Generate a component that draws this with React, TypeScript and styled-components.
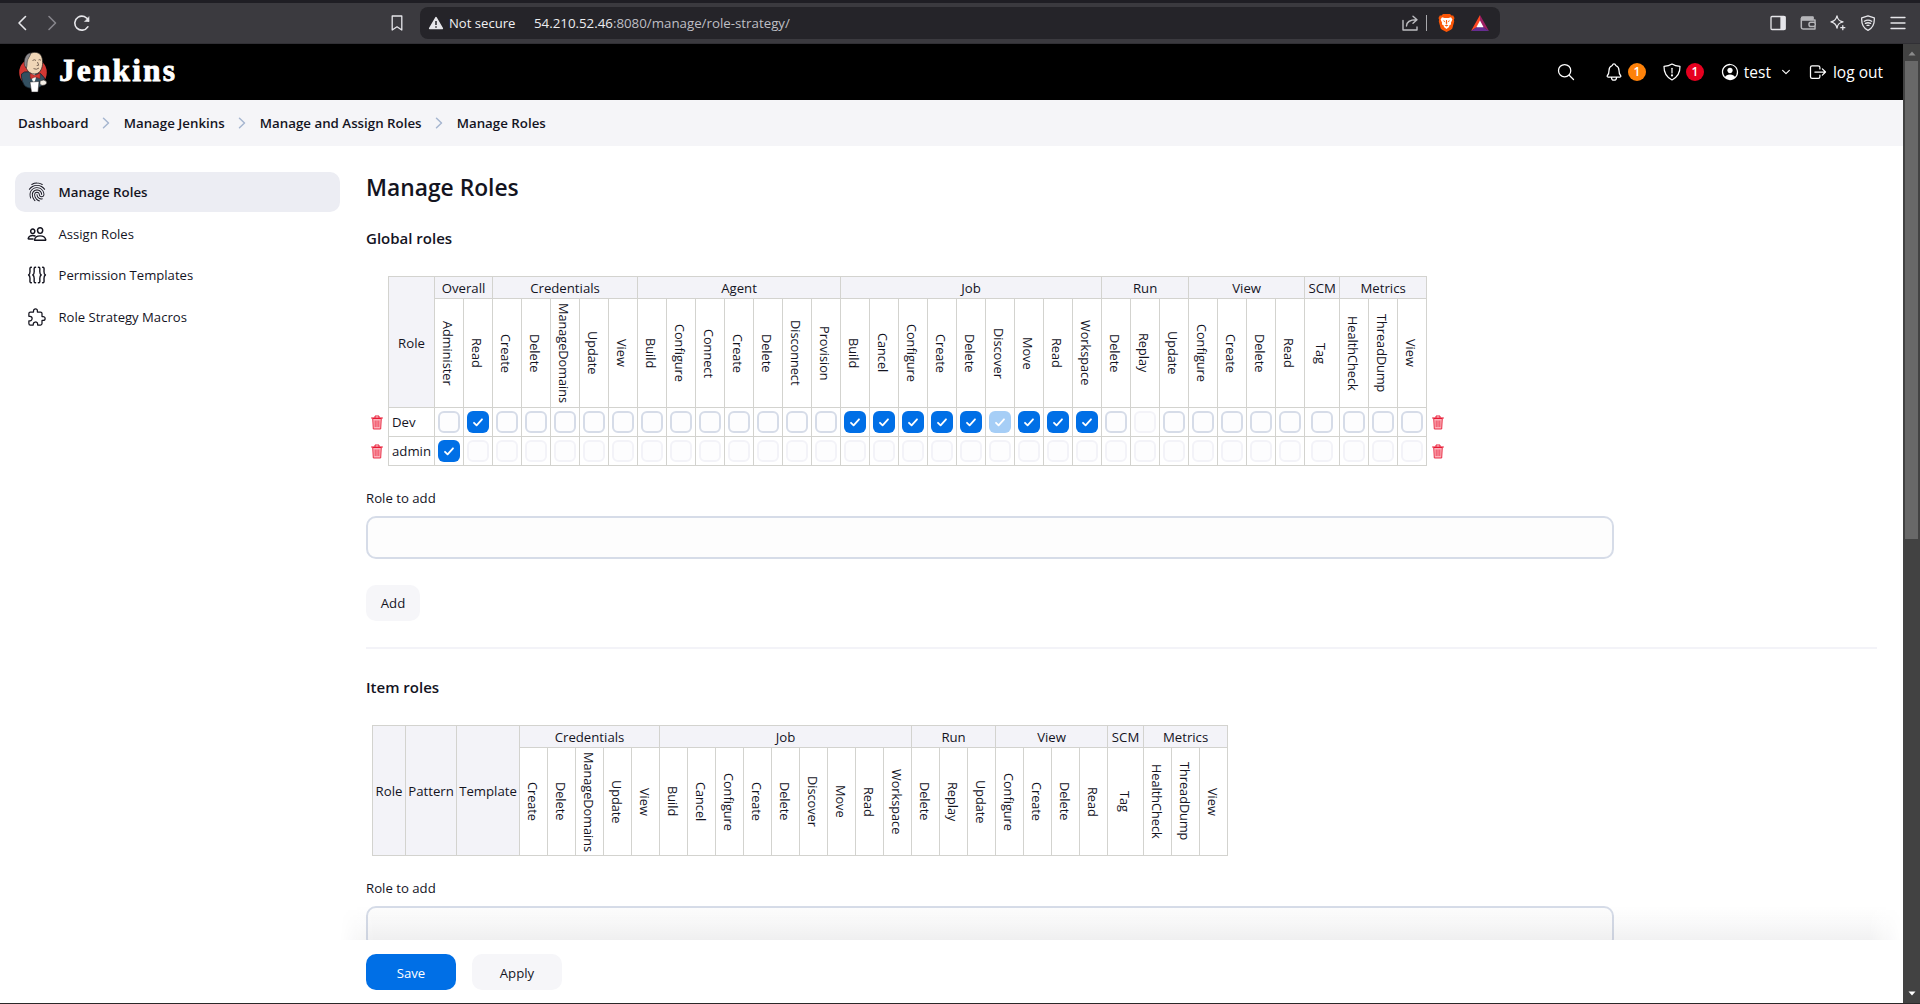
import React from "react";
import styled, { createGlobalStyle, css } from "styled-components";
import {
  IoChevronDownOutline,
  IoExtensionPuzzleOutline,
  IoFingerPrintOutline,
  IoLogOutOutline,
  IoNotificationsOutline,
  IoPeopleOutline,
  IoPersonCircleOutline,
  IoSearchOutline,
} from "react-icons/io5";

const GlobalStyle = createGlobalStyle`
  *, *::before, *::after { box-sizing: border-box; }
  html, body { margin: 0; padding: 0; background: #fff; overflow: hidden; }
  body {
    font-family: "Open Sans", "Noto Sans", sans-serif;
    font-size: 13.2px;
    color: #14141f;
  }
  svg { display: block; flex: none; }
`;

const Window = styled.div`
  display: flex;
  flex-direction: column;
  width: 1920px;
  height: 1004px;
  overflow: hidden;
  border-bottom: 1px solid #2b2829;
`;

/* ---------- browser chrome ---------- */

const Toolbar = styled.div`
  display: flex;
  align-items: center;
  flex: none;
  height: 44px;
  padding: 0 14px 0 15px;
  background: #3b3a3f;
  border-top: 3px solid #1f1e24;
  border-bottom: 1px solid #313035;
  color: #e6e6ea;
`;

const NavButtons = styled.div`
  display: flex;
  align-items: center;
  gap: 13.5px;
  width: 373px;
`;

const AddressBar = styled.div`
  display: flex;
  align-items: center;
  width: 1080px;
  height: 32px;
  margin-left: 14px;
  padding: 0 11px 0 8px;
  border-radius: 8px;
  background: #252429;
`;

const Security = styled.span`
  width: 85px;
  margin-left: 5px;
  font-size: 13.1px;
  color: #f0f0f2;
`;

const Url = styled.span`
  flex: 1;
  font-size: 13.3px;
  color: #bfbfc4;
  b { font-weight: 400; color: #ececef; }
`;

const AddressActions = styled.div`
  display: flex;
  align-items: center;
  gap: 8px;
`;

const Divider = styled.span`
  width: 1px;
  height: 16px;
  margin-right: 3px;
  background: #a9a9ad;
`;

const BrowserActions = styled.div`
  display: flex;
  gap: 14px;
  margin-left: auto;
`;

/* ---------- page frame ---------- */

const Viewport = styled.div`
  display: flex;
  flex: 1;
  min-height: 0;
`;

const Page = styled.div`
  position: relative;
  display: flex;
  flex-direction: column;
  width: 1903px;
  overflow: hidden;
`;

const Scrollbar = styled.div`
  display: flex;
  flex-direction: column;
  align-items: center;
  width: 17px;
  padding: 7px 0 7px;
  background: #424242;
`;

const Thumb = styled.div`
  width: 13px;
  height: 478px;
  margin: 5px 0 auto;
  background: #686868;
`;

const Header = styled.header`
  display: flex;
  align-items: center;
  flex: none;
  height: 56px;
  padding: 0 20px 0 18px;
  background: #000;
  color: #fff;
`;

const Wordmark = styled.span`
  margin: -3px auto 0 10px;
  font: 700 31.5px/40px "Liberation Serif", serif;
  letter-spacing: 2.1px;
  -webkit-text-stroke: 0.8px #fff;
`;

const HeaderItem = styled.div<{ $gap: number; $before: number }>`
  display: flex;
  align-items: center;
  gap: ${(p) => p.$gap}px;
  margin-left: ${(p) => p.$before}px;
  font-size: 15.5px;
  font-weight: 500;
  line-height: 24px;
`;

const Badge = styled.span<{ $color: string }>`
  width: 18px;
  height: 18px;
  border-radius: 50%;
  background: ${(p) => p.$color};
  font-size: 12px;
  font-weight: 600;
  line-height: 18px;
  text-align: center;
`;

const Breadcrumbs = styled.nav`
  display: flex;
  align-items: center;
  flex: none;
  gap: 13.6px;
  height: 46px;
  padding-left: 18px;
  background: #f5f5f8;
  font-size: 13.3px;
  font-weight: 600;
`;

const Columns = styled.div`
  display: flex;
  flex: 1;
  min-height: 0;
  padding: 26px 26px 0 15px;
`;

const Sidebar = styled.aside`
  display: flex;
  flex-direction: column;
  flex: none;
  gap: 1.6px;
  width: 325px;
  margin-right: 26px;
`;

const Task = styled.a<{ $active?: boolean }>`
  display: flex;
  align-items: center;
  gap: 11.5px;
  height: 40px;
  padding-left: 12px;
  border-radius: 10px;
  font-size: 13.1px;
  ${(p) =>
    p.$active &&
    css`
      background: #ecedf3;
      font-size: 13.3px;
      font-weight: 600;
    `}
`;

const Main = styled.main`
  flex: 1;
  min-width: 0;
`;

const Title = styled.h1`
  margin: 0 0 21px;
  font-size: 22.8px;
  font-weight: 600;
  line-height: 32px;
`;

const SectionTitle = styled.h2`
  margin: 0;
  font-size: 15px;
  font-weight: 600;
  line-height: 26px;
`;

/* ---------- permission matrix ---------- */

const line = "1px solid #d3d3cf";

const Matrix = styled.table<{ $width: number; $top: number; $left: number }>`
  width: ${(p) => p.$width}px;
  margin: ${(p) => p.$top}px 0 0 ${(p) => p.$left}px;
  table-layout: fixed;
  border-collapse: separate;
  border-spacing: 0;
`;

const HeadCell = styled.th<{ $first?: boolean; $shift?: number }>`
  height: 23px;
  padding: ${(p) => p.$shift ?? 0}px 0 0;
  border-top: ${line};
  border-right: ${line};
  border-bottom: ${line};
  border-left: ${(p) => (p.$first ? line : "none")};
  background: #f3f3f8;
  font-weight: 400;
  line-height: 18px;
  text-align: center;
  white-space: nowrap;
`;

const PermissionCell = styled.th<{ $height: number }>`
  height: ${(p) => p.$height}px;
  padding: 0;
  border-right: ${line};
  border-bottom: ${line};
  font-weight: 400;
`;

const VerticalLabel = styled.span`
  display: inline-block;
  width: 20px;
  margin-right: 2px;
  font-size: 12.7px;
  line-height: 20px;
  writing-mode: vertical-rl;
  white-space: nowrap;
  vertical-align: middle;
`;

const NameCell = styled.td`
  height: 29px;
  padding: 0 0 0 3px;
  border-right: ${line};
  border-bottom: ${line};
  border-left: ${line};
  line-height: 20px;
`;

const CheckCell = styled.td`
  padding: 3px 0;
  border-right: ${line};
  border-bottom: ${line};
`;

const ToolCell = styled.td<{ $pad: number }>`
  padding: 0 0 1px ${(p) => p.$pad}px;
`;

type State = "on" | "off" | "on-disabled" | "off-disabled";

const Box = styled.span<{ $state: State }>`
  display: flex;
  align-items: center;
  justify-content: center;
  width: 22px;
  height: 22px;
  margin: 0 auto;
  border-radius: 6px;
  border: ${(p) =>
    p.$state === "off" ? "2px solid #d6dce8" : p.$state === "off-disabled" ? "2px solid #f3f3f8" : "none"};
  background: ${(p) => (p.$state === "on" ? "#006fe6" : p.$state === "on-disabled" ? "#a6cef6" : "#fdfdfe")};
`;

/* ---------- form controls ---------- */

const Label = styled.label<{ $top: number }>`
  display: block;
  margin-top: ${(p) => p.$top}px;
  line-height: 20px;
`;

const Input = styled.input`
  display: block;
  width: 1248px;
  height: 43px;
  margin-top: 8px;
  border: 2px solid #d6dce8;
  border-radius: 10px;
  background: #fdfdfd;
`;

const Button = styled.button<{ $primary?: boolean; $width: number; $shift?: number }>`
  width: ${(p) => p.$width}px;
  height: 36px;
  padding: ${(p) => p.$shift ?? 0}px 0 0;
  border: 0;
  border-radius: 10px;
  background: ${(p) => (p.$primary ? "#006fe6" : "#f6f6f9")};
  color: ${(p) => (p.$primary ? "#fff" : "#14141f")};
  font: ${(p) => (p.$primary ? 500 : 400)} 13.2px "Open Sans", "Noto Sans", sans-serif;
`;

const AddRow = styled.div`
  display: flex;
  padding: 26px 0;
`;

const Rule = styled.hr`
  height: 2px;
  margin: 0 0 25px;
  border: 0;
  background: #f3f3f8;
`;

const SaveBar = styled.footer`
  position: absolute;
  right: 0;
  bottom: 0;
  left: 340px;
  display: flex;
  gap: 16px;
  height: 63px;
  padding: 14px 26px;
  background: #fff;
  &::before {
    content: "";
    position: absolute;
    right: 0;
    bottom: 100%;
    left: 0;
    height: 34px;
    background: linear-gradient(to top, rgba(20, 20, 31, 0.06), rgba(20, 20, 31, 0.03) 40%, transparent);
    mask-image: linear-gradient(to right, transparent, #000 34px, #000 calc(100% - 34px), transparent);
  }
`;

/* ---------- icons ---------- */

type StrokeProps = { w?: number; h?: number; sw?: number; color?: string; children: React.ReactNode };

const Stroke = ({ w = 16, h = 16, sw = 1.3, color = "currentColor", children }: StrokeProps) => (
  <svg
    width={w}
    height={h}
    viewBox={`0 0 ${w} ${h}`}
    fill="none"
    stroke={color}
    strokeWidth={sw}
    strokeLinecap="round"
    strokeLinejoin="round"
  >
    {children}
  </svg>
);

const JenkinsLogo = () => (
  <svg width="31" height="42" viewBox="0 0 31 42">
    <ellipse cx="15" cy="21.500" rx="13.800" ry="14" fill="#d33833" />
    <path d="M3.500 23c-.5 5 1.500 10 4 12.500 3 2 9 2.500 13 1 4-1.500 6-5 6-9.500l-4-4.500-7-2-9 .5z" fill="#335061" stroke="#14202a" strokeWidth=".8" />
    <path d="M14 21l-1.500 4L16 33l2.500-8z" fill="#f7f7f2" />
    <path d="M7.500 9C9 3 14 .8 18.500 1.500c5 .8 6.500 6 6 12-.5 5.500-3.500 9.500-8 9.500-5 0-8-4-9-8z" fill="#f0d6b7" stroke="#231f20" strokeWidth=".7" />
    <path d="M13 1.800C8 2.500 5.300 8 6.500 14.500L8.200 17c1-1.500.8-4 1-6C9.800 7 12 6 13 1.800z" fill="#8d8b8e" stroke="#231f20" strokeWidth=".5" />
    <path d="M14.500 9.500q2-1.500 3.500 0M20.500 9q1.500-1 2.500 .4M19.500 11l1.200 3.200-2 .4M15.500 17.600q3 1.600 5.500-.6" fill="none" stroke="#6d5a4c" strokeWidth=".9" />
    <path d="M12 22.500l5 2 5-2.500v5.500l-5-1.500-4.500 2z" fill="#d33833" stroke="#7c1c18" strokeWidth=".5" />
    <path d="M12 31l9-.5L20 41h-6.500z" fill="#fff" stroke="#231f20" strokeWidth=".5" />
    <path d="M22 30q4-2 6 0t-1 4q-3 1-5-.5z" fill="#f5efe6" stroke="#231f20" strokeWidth=".6" />
  </svg>
);

const BraveLion = () => (
  <svg width="17" height="18" viewBox="0 0 17 18">
    <path d="M5 0h7l1.500 1.600 1.700-.2L16.500 4l-.6 1.800.3 1.700-1.700 6.300c-.3 1-.8 1.500-1.600 2L8.500 18l-4.400-2.200c-.8-.5-1.300-1-1.600-2L.8 7.500l.3-1.700L.5 4l1.300-2.600 1.700.2z" fill="#fb5607" />
    <path d="M4 3.300l2.600.6h3.800l2.600-.6 1.400 2.200-1.500 3.200.2 1.600-2.300 1.600.6.8-2.900 2.400-2.900-2.400.6-.8-2.300-1.600.2-1.600-1.500-3.200z" fill="#fff" />
    <path d="M4.700 6.300l2.300.6-.4 1.400zM12.300 6.300l-2.300.6.4 1.400zM8 6h1l.3 3.500L8.500 10l-.8-.5zM6.600 11.400l1.900-.8 1.900.8-1.900 1z" fill="#fb5607" />
  </svg>
);

const BatTriangle = styled.svg`
  margin-left: 8px;
`;

const ShieldAlert = () => (
  <Stroke w={18} h={18} sw={1.2}>
    <path d="M9 1C6.800 2.500 4.200 3.200 1 3.300 .8 9.800 3.200 14 9 17c5.800-3 8.200-7.200 8-13.700C13.800 3.200 11.200 2.500 9 1z" />
    <path d="M9 5.300v4.600" />
    <circle cx="9" cy="12.400" r=".5" fill="currentColor" />
  </Stroke>
);

const Braces = () => (
  <Stroke w={20} h={20} sw={1.4}>
    <path d="M4.400 2.200C2.400 2.200 3 4 3 6.500S2.800 9.500 1.600 10c1.200.5 1.400 1 1.400 3.500s-.6 4.300 1.400 4.300" />
    <path d="M8.600 2.200c-2 0-1.400 1.800-1.400 4.300S7 9.500 5.800 10c1.200.5 1.400 1 1.400 3.500s-.6 4.300 1.400 4.300" />
    <path d="M11.400 2.200c2 0 1.400 1.800 1.400 4.300s.2 3 1.400 3.500c-1.200.5-1.400 1-1.400 3.500s.6 4.300-1.400 4.300" />
    <path d="M15.600 2.200c2 0 1.400 1.800 1.400 4.300s.2 3 1.400 3.500c-1.200.5-1.400 1-1.400 3.500s.6 4.300-1.400 4.300" />
  </Stroke>
);

const People = styled(IoPeopleOutline)`
  path { stroke-width: 38px !important; }
`;

const MenuChevron = styled(IoChevronDownOutline)`
  margin-left: 5px;
`;

const Trash = () => (
  <svg width="12" height="15" viewBox="0 0 12 15">
    <path d="M1.700 3.500h8.600l-.6 10.500H2.300z" fill="#fbb0b9" stroke="#e8203a" strokeWidth=".9" />
    <path d="M.2 3h11.600" stroke="#e6001f" strokeWidth="1" />
    <path d="M4 2.800V1h4v1.800" fill="none" stroke="#e6001f" strokeWidth=".9" />
    <path d="M4.200 5.500v6.500M6 5.500v6.500M7.800 5.500v6.500" stroke="#e6001f" strokeWidth=".6" />
  </svg>
);

const Check = () => (
  <Stroke w={22} h={22} sw={1.8} color="#fff">
    <path d="M7 11.800l2.600 2.600L15 8.300" />
  </Stroke>
);

const Crumb = () => (
  <Stroke w={8} h={12} sw={1.5} color="#a6b6d0">
    <path d="M1.500 1.200L6.500 6l-5 4.800" />
  </Stroke>
);

const Arrow = ({ down }: { down?: boolean }) => (
  <svg width="8" height="5" viewBox="0 0 8 5">
    <path d={down ? "M.5 .5h7L4 4.500z" : "M.5 4.500h7L4 .5z"} fill={down ? "#fff" : "#8b8b8b"} />
  </svg>
);

/* ---------- data ---------- */

type Group = { name: string; permissions: string[] };

const credentials: Group = {
  name: "Credentials",
  permissions: ["Create", "Delete", "ManageDomains", "Update", "View"],
};

const shared: Group[] = [
  {
    name: "Job",
    permissions: ["Build", "Cancel", "Configure", "Create", "Delete", "Discover", "Move", "Read", "Workspace"],
  },
  { name: "Run", permissions: ["Delete", "Replay", "Update"] },
  { name: "View", permissions: ["Configure", "Create", "Delete", "Read"] },
  { name: "SCM", permissions: ["Tag"] },
  { name: "Metrics", permissions: ["HealthCheck", "ThreadDump", "View"] },
];

const globalGroups: Group[] = [
  { name: "Overall", permissions: ["Administer", "Read"] },
  credentials,
  {
    name: "Agent",
    permissions: ["Build", "Configure", "Connect", "Create", "Delete", "Disconnect", "Provision"],
  },
  ...shared,
];

const itemGroups: Group[] = [credentials, ...shared];

const roles: { name: string; state: (group: string, permission: string) => State }[] = [
  {
    name: "Dev",
    state: (group, permission) => {
      if (group === "Job") return permission === "Discover" ? "on-disabled" : "on";
      if (group === "Overall" && permission === "Read") return "on";
      return group === "Run" && permission === "Replay" ? "off-disabled" : "off";
    },
  },
  { name: "admin", state: (_group, permission) => (permission === "Administer" ? "on" : "off-disabled") },
];

const Col = styled.col<{ $width: number }>`
  width: ${(p) => p.$width}px;
`;

const Cols = ({ groups, width, scm }: { groups: Group[]; width: number; scm: number }) => (
  <>
    {groups.flatMap((g) =>
      g.permissions.map((p) => <Col key={g.name + p} $width={g.name === "SCM" ? scm : width} />),
    )}
  </>
);

const GroupHeads = ({ groups }: { groups: Group[] }) => (
  <>
    {groups.map((g) => (
      <HeadCell key={g.name} colSpan={g.permissions.length}>
        {g.name}
      </HeadCell>
    ))}
  </>
);

const PermissionHeads = ({ groups, height }: { groups: Group[]; height: number }) => (
  <>
    {groups.flatMap((g) =>
      g.permissions.map((p) => (
        <PermissionCell key={g.name + p} $height={height}>
          <VerticalLabel>{p}</VerticalLabel>
        </PermissionCell>
      )),
    )}
  </>
);

const GlobalMatrix = () => (
  <Matrix $width={1082} $top={25} $left={5}>
    <colgroup>
      <Col $width={17} />
      <Col $width={47} />
      <Cols groups={globalGroups} width={29} scm={35} />
      <Col $width={26} />
    </colgroup>
    <thead>
      <tr>
        <td rowSpan={2} />
        <HeadCell rowSpan={2} $first $shift={2}>
          Role
        </HeadCell>
        <GroupHeads groups={globalGroups} />
      </tr>
      <tr>
        <PermissionHeads groups={globalGroups} height={109} />
      </tr>
    </thead>
    <tbody>
      {roles.map((role) => (
        <tr key={role.name}>
          <ToolCell $pad={0}>
            <Trash />
          </ToolCell>
          <NameCell>{role.name}</NameCell>
          {globalGroups.flatMap((g) =>
            g.permissions.map((p) => {
              const state = role.state(g.name, p);
              return (
                <CheckCell key={g.name + p}>
                  <Box $state={state}>{state.startsWith("on") && <Check />}</Box>
                </CheckCell>
              );
            }),
          )}
          <ToolCell $pad={5}>
            <Trash />
          </ToolCell>
        </tr>
      ))}
    </tbody>
  </Matrix>
);

const ItemMatrix = () => (
  <Matrix $width={856} $top={25} $left={6}>
    <colgroup>
      <Col $width={34} />
      <Col $width={51} />
      <Col $width={63} />
      <Cols groups={itemGroups} width={28} scm={36} />
    </colgroup>
    <thead>
      <tr>
        <HeadCell rowSpan={2} $first>
          Role
        </HeadCell>
        <HeadCell rowSpan={2}>Pattern</HeadCell>
        <HeadCell rowSpan={2}>Template</HeadCell>
        <GroupHeads groups={itemGroups} />
      </tr>
      <tr>
        <PermissionHeads groups={itemGroups} height={108} />
      </tr>
    </thead>
  </Matrix>
);

/* ---------- sections ---------- */

const BrowserToolbar = () => (
  <Toolbar>
    <NavButtons>
      <Stroke sw={1.6}>
        <path d="M10.500 1.500L4 8l6.500 6.500" />
      </Stroke>
      <Stroke sw={1.6} color="#87868c">
        <path d="M4 1.500L10.500 8 4 14.500" />
      </Stroke>
      <Stroke sw={1.6}>
        <path d="M13.800 11.800A7 7 0 1 1 14.500 6" />
        <path d="M15 2v4.500h-4.200z" fill="#e6e6ea" strokeWidth=".6" />
      </Stroke>
    </NavButtons>
    <Stroke w={18}>
      <path d="M4.200 1h9.600v14L9 11.800 4.200 15z" />
    </Stroke>
    <AddressBar>
      <svg width="16" height="14" viewBox="0 0 16 14">
        <path d="M8 1.600L14.300 12.500H1.700z" fill="#e6e6ea" stroke="#e6e6ea" strokeWidth="1.600" strokeLinejoin="round" />
        <path d="M8 5v4M8 10.300v1.400" stroke="#252429" strokeWidth="1.500" />
      </svg>
      <Security>Not secure</Security>
      <Url>
        <b>54.210.52.46</b>:8080/manage/role-strategy/
      </Url>
      <AddressActions>
        <Stroke color="#bdbdc1" sw={1.4}>
          <path d="M1 5.500V15h14v-3M4.500 11C4.500 7 7.500 4.700 14.500 4.700M11 1.200l4 3.500-4 3.500" />
        </Stroke>
        <Divider />
        <BraveLion />
        <BatTriangle width="18" height="16" viewBox="0 0 18 16">
          <path d="M9 0L0 16l9-6z" fill="#ff4724" />
          <path d="M9 0l9 16-9-6z" fill="#9e1f63" />
          <path d="M0 16h18l-9-6z" fill="#662d91" />
          <path d="M9 5.500l3.600 6.700H5.400z" fill="#fff" />
        </BatTriangle>
      </AddressActions>
    </AddressBar>
    <BrowserActions>
      <Stroke>
        <rect x="1" y="1.500" width="14" height="13" rx="1" />
        <path d="M11 2h4v12h-4z" fill="#e6e6ea" />
      </Stroke>
      <Stroke color="#b5b5b9" sw={1.5}>
        <path d="M13 3.500V2H3a1.500 1.500 0 0 0 0 3h12v2.500M15 11.500V14H3a1.700 1.700 0 0 1-1.700-1.700V3.500" />
        <path d="M1.800 2.500h11v2h-11z" fill="#b5b5b9" />
        <rect x="9" y="7.300" width="6.300" height="4.200" rx="1.800" />
      </Stroke>
      <Stroke>
        <path d="M7 .9c.7 3.900 2 5.200 6 6-4 .9-5.300 2.200-6 6.200-.8-4-2.200-5.300-6-6.200 3.800-.8 5.200-2.100 6-6z" />
        <path d="M12.800 10.700v4M10.800 12.700h4" />
      </Stroke>
      <Stroke>
        <path d="M8 .8l6.300 2c.4 6-.8 10-6.300 12.600C2.500 12.800 1.300 8.800 1.700 2.800z" />
        <path d="M4.300 6.200q3.700-2 7.400 0M5.400 8.400q2.600-1.300 5.200 0M7 10.400h2" />
      </Stroke>
      <Stroke>
        <path d="M1 2.500h14M1 8h14M1 13.500h14" />
      </Stroke>
    </BrowserActions>
  </Toolbar>
);

const PageHeader = () => (
  <Header>
    <JenkinsLogo />
    <Wordmark>Jenkins</Wordmark>
    <HeaderItem $gap={0} $before={0}>
      <IoSearchOutline size={20} />
    </HeaderItem>
    <HeaderItem $gap={4} $before={28}>
      <IoNotificationsOutline size={20} />
      <Badge $color="#fe820a">1</Badge>
    </HeaderItem>
    <HeaderItem $gap={5} $before={17}>
      <ShieldAlert />
      <Badge $color="#e6001f">1</Badge>
    </HeaderItem>
    <HeaderItem $gap={4} $before={16}>
      <IoPersonCircleOutline size={20} />
      test
      <MenuChevron size={12} />
    </HeaderItem>
    <HeaderItem $gap={5} $before={16}>
      <IoLogOutOutline size={20} />
      log out
    </HeaderItem>
  </Header>
);

const App = () => (
  <Window>
    <GlobalStyle />
    <BrowserToolbar />
    <Viewport>
      <Page>
        <PageHeader />
        <Breadcrumbs>
          <span>Dashboard</span>
          <Crumb />
          <span>Manage Jenkins</span>
          <Crumb />
          <span>Manage and Assign Roles</span>
          <Crumb />
          <span>Manage Roles</span>
        </Breadcrumbs>
        <Columns>
          <Sidebar>
            <Task $active>
              <IoFingerPrintOutline size={20} />
              Manage Roles
            </Task>
            <Task>
              <People size={20} />
              Assign Roles
            </Task>
            <Task>
              <Braces />
              Permission Templates
            </Task>
            <Task>
              <IoExtensionPuzzleOutline size={20} />
              Role Strategy Macros
            </Task>
          </Sidebar>
          <Main>
            <Title>Manage Roles</Title>
            <SectionTitle>Global roles</SectionTitle>
            <GlobalMatrix />
            <Label $top={22}>Role to add</Label>
            <Input />
            <AddRow>
              <Button $width={54}>Add</Button>
            </AddRow>
            <Rule />
            <SectionTitle>Item roles</SectionTitle>
            <ItemMatrix />
            <Label $top={22}>Role to add</Label>
            <Input />
          </Main>
        </Columns>
        <SaveBar>
          <Button $primary $width={90} $shift={1}>
            Save
          </Button>
          <Button $width={90} $shift={1}>
            Apply
          </Button>
        </SaveBar>
      </Page>
      <Scrollbar>
        <Arrow />
        <Thumb />
        <Arrow down />
      </Scrollbar>
    </Viewport>
  </Window>
);

export default App;
